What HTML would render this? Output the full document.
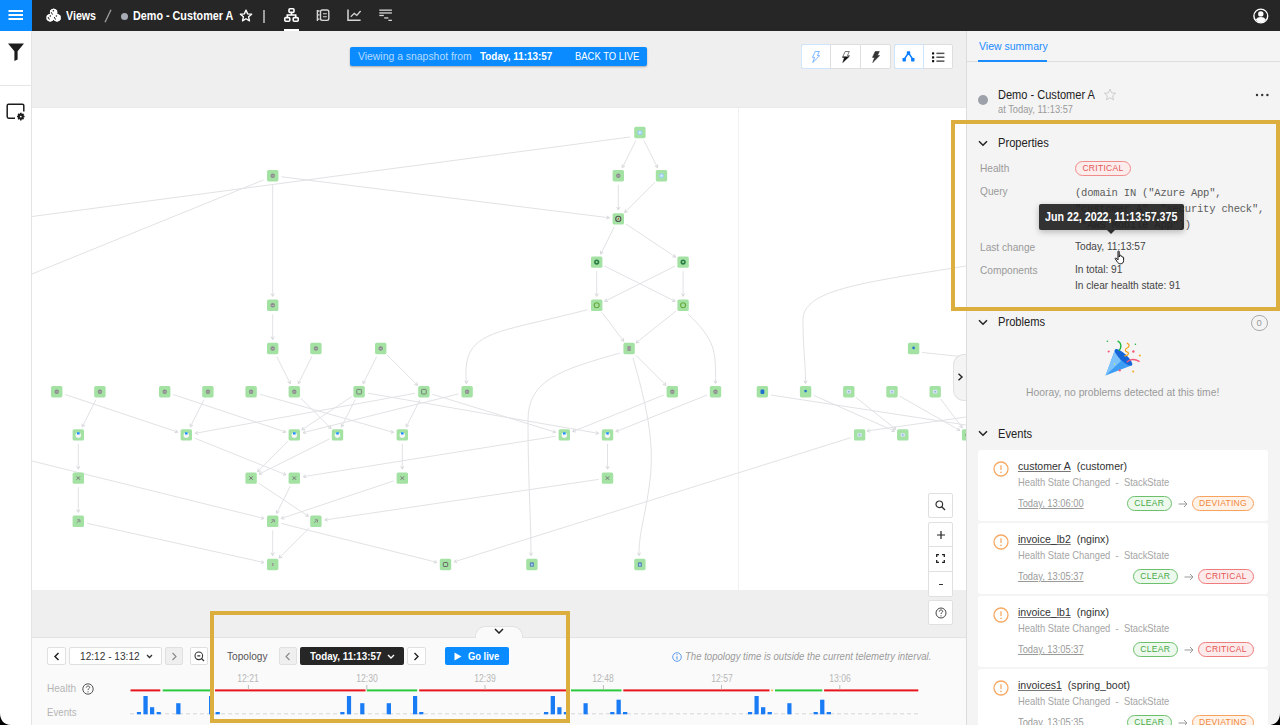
<!DOCTYPE html>
<html><head><meta charset="utf-8">
<style>
*{box-sizing:border-box;margin:0;padding:0}
html,body{width:1280px;height:725px;overflow:hidden;background:#fff;font-family:"Liberation Sans",sans-serif;color:#222}
.abs{position:absolute}
#top{position:absolute;left:0;top:0;width:1280px;height:31px;background:#262626}
#menu{position:absolute;left:0;top:0;width:32px;height:31px;background:#0a8bff}
#side{position:absolute;left:0;top:31px;width:32px;height:694px;background:#fff;border-right:1px solid #e4e4e4}
#band1{position:absolute;left:32px;top:31px;width:934px;height:77px;background:#efefef;border-bottom:1px solid #eaeaea}
#canvas{position:absolute;left:32px;top:108px;width:934px;height:482px;background:#fff}
#band2{position:absolute;left:32px;top:590px;width:934px;height:48px;background:#efefef;border-bottom:1px solid #e2e2e2}
#bottom{position:absolute;left:32px;top:638px;width:934px;height:87px;background:#fafafa}
#panel{position:absolute;left:966px;top:31px;width:314px;height:694px;background:#f4f4f4;border-left:1px solid #dcdcdc}
.t{position:absolute;white-space:nowrap;line-height:1.15}
.sx{transform:scaleX(.86);transform-origin:0 50%}
.hl{position:absolute;border:4px solid #dcae3d}
</style></head><body>
<div id="top"></div>
<div id="menu"><svg class="abs" style="left:8px;top:9px" width="16" height="12" viewBox="0 0 16 12"><rect x="0.5" y="1" width="14.5" height="2" fill="#fff"/><rect x="0.5" y="5" width="14.5" height="2" fill="#fff"/><rect x="0.5" y="9" width="14.5" height="2" fill="#fff"/></svg></div>
<svg class="abs" style="left:44px;top:6px" width="20" height="19" viewBox="44 6 20 19">
<g fill="#fff"><path d="M53.6 8.6L57.2 10.6V14.4L53.6 16.4L50 14.4V10.6Z"/><path d="M50.2 13.8L53.8 15.8V19.8L50.2 21.8L46.6 19.8V15.8Z"/><path d="M57 13.8L60.6 15.8V19.8L57 21.8L53.4 19.8V15.8Z"/>
<circle cx="53.6" cy="12.5" r="3.7"/><circle cx="50.2" cy="17.8" r="3.7"/><circle cx="57" cy="17.8" r="3.7"/></g>
<g fill="#1a1a1a"><circle cx="53.4" cy="10.8" r=".75"/><circle cx="50.3" cy="15.9" r=".75"/><circle cx="56.4" cy="15.9" r=".75"/></g>
<g stroke="#1a1a1a" stroke-width="1" stroke-linecap="round"><path d="M51.4 12.6L52.3 14.2M48.2 17.4L49.2 19.2M54.4 17.4L55.4 19.2"/></g>
</svg>
<div class="t" style="left:66px;top:9px;font-size:13px;color:#fff;font-weight:bold;transform:scaleX(.82);transform-origin:0 50%">Views</div>
<svg class="abs" style="left:104px;top:9px" width="8" height="14" viewBox="0 0 8 14"><path d="M1 13.2L7 0.8" stroke="#9a9a9a" stroke-width="1.4"/></svg>
<div class="abs" style="left:121px;top:12.5px;width:7px;height:7px;border-radius:50%;background:#a7acb4"></div>
<div class="t" style="left:133px;top:9px;font-size:13px;color:#fff;font-weight:bold;transform:scaleX(.83);transform-origin:0 50%">Demo - Customer A</div>
<svg class="abs" style="left:239px;top:9px" width="14" height="13" viewBox="0 0 24 23"><path d="M12 2 L14.9 8.6 L22 9.2 L16.6 13.9 L18.2 20.9 L12 17.2 L5.8 20.9 L7.4 13.9 L2 9.2 L9.1 8.6 Z" fill="none" stroke="#fff" stroke-width="2.4" stroke-linejoin="round"/></svg>
<div class="abs" style="left:263px;top:9.5px;width:2px;height:13.5px;background:#9d9d9d"></div>
<svg class="abs" style="left:284px;top:8px" width="15" height="14" viewBox="0 0 15 14"><g fill="none" stroke="#fff" stroke-width="1.6"><rect x="5" y="0.8" width="5" height="3.6" rx="1"/><rect x="0.8" y="9.6" width="5" height="3.6" rx="1"/><rect x="9.2" y="9.6" width="5" height="3.6" rx="1"/><path d="M7.5 4.4V7H3.3V9.6M7.5 7H11.7V9.6"/></g></svg>
<div class="abs" style="left:284px;top:28.5px;width:15px;height:2.5px;background:#fff"></div>
<svg class="abs" style="left:310px;top:4px" width="90" height="22" viewBox="310 4 90 22">
<g fill="none" stroke="#d6d6d6" stroke-width="1.4">
<path d="M317.4 10V21M317.4 11H319.6M317.4 14.9H319.6M317.4 19.1H319.6"/>
<rect x="320.5" y="10" width="8.3" height="10.4" rx="1.8"/>
<path d="M323 13.8H326.8M323 16.7H326.8" stroke-width="1.1"/>
<path d="M348 9.6V20.3H360.6" stroke-width="1.5"/>
<path d="M350.8 16.7L354.3 13.4L356.8 15.4L360.6 11" stroke-width="1.3"/>
</g>
<g fill="#d6d6d6"><rect x="379.3" y="9.5" width="12.6" height="1.3"/><rect x="379.3" y="12.3" width="12.6" height="1.3"/><rect x="379.3" y="14.8" width="4.5" height="1.3"/><rect x="384.2" y="17.3" width="4.2" height="1.3"/><rect x="388.4" y="19.7" width="3.5" height="1.3"/></g>
</svg>
<svg class="abs" style="left:1252.5px;top:7.5px" width="16" height="16" viewBox="0 0 16 16"><circle cx="7.8" cy="8" r="6.9" fill="none" stroke="#fff" stroke-width="1.4"/><circle cx="7.8" cy="5.9" r="2.7" fill="#fff"/><path d="M2.8 11.6C4 9.6 5.6 8.9 7.8 8.9C10 8.9 11.6 9.6 12.8 11.6C11.6 13.6 9.8 14.4 7.8 14.4C5.8 14.4 4 13.6 2.8 11.6Z" fill="#fff"/></svg>
<div id="side">
<svg class="abs" style="left:8px;top:12px" width="16" height="18" viewBox="0 0 16 18"><path d="M0 0.5H16L9.6 8.2V16.6L6.4 18V8.2Z" fill="#1c1c1c"/></svg>
<div class="abs" style="left:0;top:54px;width:31px;height:1px;background:#e6e6e6"></div>
<svg class="abs" style="left:6px;top:72px" width="20" height="18" viewBox="0 0 20 18"><path d="M9 15.2H2.6Q1.2 15.2 1.2 13.8V2.6Q1.2 1.2 2.6 1.2H16.4Q17.8 1.2 17.8 2.6V8.5" fill="none" stroke="#1c1c1c" stroke-width="1.5"/><g transform="translate(14.8,13.6) scale(.9)"><circle r="2.6" fill="none" stroke="#1c1c1c" stroke-width="1.6"/><g stroke="#1c1c1c" stroke-width="1.7"><path d="M0 -4.2V4.2M-4.2 0H4.2M-3 -3L3 3M-3 3L3 -3"/></g><circle r="1" fill="#fff"/></g></svg>
</div>
<div id="band1"></div>
<div class="abs" style="left:350px;top:47px;width:297px;height:19px;background:#0a8bff;border-radius:2px;box-shadow:0 1px 2px rgba(0,0,0,.3)"></div>
<div class="t" style="left:357.5px;top:50px;font-size:11px;color:#b5dbff;transform:scaleX(.946);transform-origin:0 50%">Viewing a snapshot from</div>
<div class="t" style="left:480px;top:50px;font-size:11px;color:#fff;font-weight:bold;transform:scaleX(.9);transform-origin:0 50%">Today, 11:13:57</div>
<div class="t" style="left:575px;top:50px;font-size:11px;color:#fff;transform:scaleX(.86);transform-origin:0 50%">BACK TO LIVE</div>
<div class="abs" style="left:801px;top:43.5px;width:89.5px;height:25px;background:#fff;border:1px solid #dedede;border-radius:2px"></div>
<div class="abs" style="left:801px;top:43.5px;width:30px;height:25px;border:1px solid #cfe5fb;border-radius:2px 0 0 2px"></div>
<div class="abs" style="left:830px;top:44px;width:1px;height:24px;background:#dedede"></div>
<div class="abs" style="left:860px;top:44px;width:1px;height:24px;background:#dedede"></div>
<div class="abs" style="left:893.5px;top:43.5px;width:59.5px;height:25px;background:#fff;border:1px solid #dedede;border-radius:2px"></div>
<div class="abs" style="left:893.5px;top:43.5px;width:30px;height:25px;border:1px solid #cfe5fb;border-radius:2px 0 0 2px"></div>
<svg class="abs" style="left:811.5px;top:50.5px" width="8" height="12" viewBox="0 0 8 12"><path d="M3.2 0.5H7.3L5.4 4.6H7.6L0.8 11.6L2.6 6.4H0.5Z" fill="none" stroke="#5aa5ff" stroke-width="0.8" stroke-linejoin="round"/></svg>
<svg class="abs" style="left:841.5px;top:50.5px" width="8" height="12" viewBox="0 0 8 12"><path d="M3.2 0.5H7.3L5.4 4.6H7.6L0.8 11.6L2.6 6.4H0.5Z" fill="none" stroke="#444" stroke-width="0.7" stroke-linejoin="round"/><path d="M0.9 5.5H7.6L0.8 11.6L2.4 6.6H0.4Z" fill="#111"/></svg>
<svg class="abs" style="left:871.5px;top:50.5px" width="8" height="12" viewBox="0 0 8 12"><path d="M3.2 0.5H7.3L5.4 4.6H7.6L0.8 11.6L2.6 6.4H0.5Z" fill="#333" stroke="#333" stroke-width="0.6" stroke-linejoin="round"/></svg>
<svg class="abs" style="left:902px;top:51px" width="13" height="11" viewBox="0 0 13 11"><path d="M6.5 2L2 8.5M6.5 2L11 8.5" stroke="#0a7cff" stroke-width="1.4"/><rect x="4.8" y="0.3" width="3.4" height="3.4" rx=".6" fill="#0a7cff"/><rect x="0.5" y="7" width="3.4" height="3.4" rx=".6" fill="#0a7cff"/><rect x="9.1" y="7" width="3.4" height="3.4" rx=".6" fill="#0a7cff"/></svg>
<svg class="abs" style="left:932px;top:51.5px" width="13" height="11" viewBox="0 0 13 11"><g fill="#111"><rect x="0" y="0.3" width="2.2" height="2.2" rx=".5"/><rect x="0" y="4.2" width="2.2" height="2.2" rx=".5"/><rect x="0" y="8.1" width="2.2" height="2.2" rx=".5"/></g><g fill="#555"><rect x="4.4" y="0.6" width="8" height="1.5"/><rect x="4.4" y="4.5" width="8" height="1.5"/><rect x="4.4" y="8.4" width="8" height="1.5"/></g></svg>
<div id="canvas"></div>
<!--GRAPH-->
<svg class="abs" style="left:0;top:0" width="966" height="590" viewBox="0 0 966 590">
<rect x="32" y="108" width="934" height="482" fill="#fff"/>
<line x1="738.5" y1="108" x2="738.5" y2="590" stroke="#f1f1f1" stroke-width="1"/>
<path d="M635.9 140.5L622.3 167.7M643.9 140.5L657.5 167.7M272.7 184.7L272.7 296.3M281.6 176.8L609.4 217.8M618.3 184.7L618.3 209.9M655.1 182.1L624.7 212.5M614.3 226.9L600.7 254.1M625.8 223.9L675.6 257.1M596.7 271.1L596.7 296.3M683.1 271.1L683.1 296.3M604.7 266.1L675.1 301.3M675.1 266.1L604.7 301.3M272.7 314.3L272.7 339.5M602.1 312.5L623.7 341.3M676.1 310.9L636.1 342.9M276.7 356.5L290.3 383.7M311.9 356.5L298.3 383.7M376.7 356.5L363.1 383.7M387.1 354.9L417.5 385.3M635.5 354.9L665.9 385.3M95.9 399.7L82.3 426.9M65.2 394.5L177.8 432.1M203.9 399.7L190.3 426.9M173.2 394.5L285.8 432.1M259.8 394.2L393.6 432.4M300.7 398.1L331.1 428.5M351.6 396.7L301.8 429.9M355.1 399.7L341.5 426.9M415.0 393.3L195.2 433.3M458.4 393.9L303.0 432.7M419.9 399.7L406.3 426.9M368.0 393.2L598.6 433.4M432.5 394.3L555.7 432.3M663.9 395.0L572.7 431.6M707.1 395.0L615.9 431.6M813.8 395.4L894.6 431.2M855.8 397.3L895.8 429.3M899.8 396.2L959.8 430.4M940.6 398.9L962.2 427.7M555.4 436.3L303.2 476.7M78.3 443.9L78.3 469.1M194.7 438.2L285.9 474.8M287.9 441.3L257.5 471.7M329.5 438.9L259.1 474.1M402.3 443.9L402.3 469.1M607.5 443.9L607.5 469.1M598.6 479.4L324.8 520.0M78.3 487.1L78.3 512.3M258.6 483.1L308.4 516.3M290.3 486.1L276.7 513.3M393.8 480.9L281.2 518.5M851.0 437.6L454.1 561.8M87.1 523.3L263.9 562.5M272.7 530.3L272.7 555.5M309.5 527.7L279.1 558.1M281.4 523.5L436.8 562.3M630 137L32 216.5M263.5 180L32 274M32 461L264 518.5M922 352.5L966 357M771 395L966 425M966 417L867 431M587.4 309.7C490 335 462 330 466.4 383.5M620 353C560 370 528 380 528 420C528 480 531 520 531 555.5M633 358C645 400 655 440 650 480C645 520 639 530 639 555.5M688 314C715 340 716 350 715.5 383.5M966 266C860 283 803 290 803 320C803 350 805.5 360 805.5 383.5" fill="none" stroke="#e1e2e5" stroke-width="1"/>
<path d="M622.1 164.5L622.3 167.7L625.0 165.9M654.8 165.9L657.5 167.7L657.7 164.5M271.1 293.5L272.7 296.3L274.3 293.5M606.4 219.0L609.4 217.8L606.8 215.9M616.7 207.1L618.3 209.9L619.9 207.1M625.5 209.4L624.7 212.5L627.8 211.7M600.5 250.9L600.7 254.1L603.4 252.3M672.4 256.9L675.6 257.1L674.2 254.2M595.1 293.5L596.7 296.3L598.3 293.5M681.5 293.5L683.1 296.3L684.7 293.5M671.9 301.5L675.1 301.3L673.3 298.6M606.5 298.6L604.7 301.3L607.9 301.5M271.1 336.7L272.7 339.5L274.3 336.7M620.8 340.0L623.7 341.3L623.3 338.1M637.3 339.9L636.1 342.9L639.3 342.4M287.6 381.9L290.3 383.7L290.5 380.5M298.1 380.5L298.3 383.7L301.0 381.9M362.9 380.5L363.1 383.7L365.8 381.9M414.4 384.5L417.5 385.3L416.7 382.2M662.8 384.5L665.9 385.3L665.1 382.2M82.1 423.7L82.3 426.9L85.0 425.1M174.6 432.7L177.8 432.1L175.6 429.7M190.1 423.7L190.3 426.9L193.0 425.1M282.6 432.7L285.8 432.1L283.6 429.7M390.5 433.2L393.6 432.4L391.4 430.1M328.0 427.7L331.1 428.5L330.3 425.4M303.2 427.0L301.8 429.9L305.0 429.7M341.3 423.7L341.5 426.9L344.2 425.1M197.6 431.2L195.2 433.3L198.2 434.4M305.3 430.5L303.0 432.7L306.1 433.6M406.1 423.7L406.3 426.9L409.0 425.1M595.6 434.5L598.6 433.4L596.2 431.3M552.6 433.0L555.7 432.3L553.5 429.9M574.6 429.0L572.7 431.6L575.8 432.0M617.8 429.0L615.9 431.6L619.0 432.0M891.4 431.6L894.6 431.2L892.7 428.7M892.6 428.8L895.8 429.3L894.6 426.3M956.6 430.4L959.8 430.4L958.2 427.7M959.3 426.4L962.2 427.7L961.8 424.5M305.7 474.7L303.2 476.7L306.2 477.8M76.7 466.3L78.3 469.1L79.9 466.3M282.8 475.2L285.9 474.8L284.0 472.2M258.3 468.6L257.5 471.7L260.6 470.9M260.9 471.4L259.1 474.1L262.3 474.3M400.7 466.3L402.3 469.1L403.9 466.3M605.9 466.3L607.5 469.1L609.1 466.3M327.3 518.0L324.8 520.0L327.8 521.2M76.7 509.5L78.3 512.3L79.9 509.5M305.2 516.1L308.4 516.3L307.0 513.4M276.5 510.1L276.7 513.3L279.4 511.5M283.4 516.1L281.2 518.5L284.4 519.1M456.3 559.5L454.1 561.8L457.2 562.5M260.9 563.5L263.9 562.5L261.6 560.4M271.1 552.7L272.7 555.5L274.3 552.7M279.9 555.0L279.1 558.1L282.2 557.3M433.7 563.2L436.8 562.3L434.5 560.1M260.9 519.4L264.0 518.5L261.7 516.3M869.5 429.0L867.0 431.0L870.0 432.2M464.8 380.7L466.4 383.5L468.0 380.7M529.4 552.7L531.0 555.5L532.6 552.7M637.4 552.7L639.0 555.5L640.6 552.7M713.9 380.7L715.5 383.5L717.1 380.7M803.9 380.7L805.5 383.5L807.1 380.7" fill="none" stroke="#d6d7da" stroke-width="1"/>
<rect x="634.2" y="126.8" width="11.4" height="11.4" rx="1.6" fill="#a4e2a4"/>
<circle cx="639.9" cy="132.5" r="2.6" fill="#9fd2ec"/><circle cx="639.9" cy="132.5" r="1" fill="#e8f6ff"/>
<rect x="267.0" y="170.0" width="11.4" height="11.4" rx="1.6" fill="#a4e2a4"/>
<circle cx="272.7" cy="175.7" r="2.2" fill="#8a8a8a"/><path d="M271.4 175.9h2.6" stroke="#c9c9c9" stroke-width=".7"/>
<rect x="612.6" y="170.0" width="11.4" height="11.4" rx="1.6" fill="#a4e2a4"/>
<circle cx="618.3" cy="175.7" r="2.2" fill="#8a8a8a"/><path d="M617.0 175.9h2.6" stroke="#c9c9c9" stroke-width=".7"/>
<rect x="655.8" y="170.0" width="11.4" height="11.4" rx="1.6" fill="#a4e2a4"/>
<circle cx="661.5" cy="175.7" r="2.6" fill="#9fd2ec"/><circle cx="661.5" cy="175.7" r="1" fill="#e8f6ff"/>
<rect x="612.6" y="213.2" width="11.4" height="11.4" rx="1.6" fill="#a4e2a4"/>
<circle cx="618.3" cy="218.9" r="2.6" fill="none" stroke="#555" stroke-width="1.1"/><path d="M618.8 217.9l-1 2" stroke="#d04040" stroke-width="1"/>
<rect x="591.0" y="256.4" width="11.4" height="11.4" rx="1.6" fill="#a4e2a4"/>
<circle cx="596.7" cy="262.1" r="2.6" fill="#2a7d45"/><circle cx="596.7" cy="262.1" r="1" fill="#a4e2a4"/>
<rect x="677.4" y="256.4" width="11.4" height="11.4" rx="1.6" fill="#a4e2a4"/>
<circle cx="683.1" cy="262.1" r="2.6" fill="#2a7d45"/><circle cx="683.1" cy="262.1" r="1" fill="#a4e2a4"/>
<rect x="267.0" y="299.6" width="11.4" height="11.4" rx="1.6" fill="#a4e2a4"/>
<circle cx="272.7" cy="305.3" r="2.2" fill="#8a8a8a"/><path d="M271.4 305.5h2.6" stroke="#c9c9c9" stroke-width=".7"/>
<rect x="591.0" y="299.6" width="11.4" height="11.4" rx="1.6" fill="#a4e2a4"/>
<circle cx="596.7" cy="305.3" r="2.5" fill="none" stroke="#6aa83a" stroke-width="1.1"/>
<rect x="677.4" y="299.6" width="11.4" height="11.4" rx="1.6" fill="#a4e2a4"/>
<circle cx="683.1" cy="305.3" r="2.5" fill="none" stroke="#6aa83a" stroke-width="1.1"/>
<rect x="267.0" y="342.8" width="11.4" height="11.4" rx="1.6" fill="#a4e2a4"/>
<circle cx="272.7" cy="348.5" r="2.2" fill="#8a8a8a"/><path d="M271.4 348.7h2.6" stroke="#c9c9c9" stroke-width=".7"/>
<rect x="310.2" y="342.8" width="11.4" height="11.4" rx="1.6" fill="#a4e2a4"/>
<circle cx="315.9" cy="348.5" r="2.2" fill="#8a8a8a"/><path d="M314.6 348.7h2.6" stroke="#c9c9c9" stroke-width=".7"/>
<rect x="375.0" y="342.8" width="11.4" height="11.4" rx="1.6" fill="#a4e2a4"/>
<circle cx="380.7" cy="348.5" r="2.2" fill="#8a8a8a"/><path d="M379.4 348.7h2.6" stroke="#c9c9c9" stroke-width=".7"/>
<rect x="623.4" y="342.8" width="11.4" height="11.4" rx="1.6" fill="#a4e2a4"/>
<rect x="627.4" y="346.0" width="3.4" height="5" fill="#999"/>
<rect x="907.9" y="342.8" width="11.4" height="11.4" rx="1.6" fill="#a4e2a4"/>
<circle cx="913.6" cy="347.9" r="1.3" fill="#1f6fd0"/>
<rect x="51.0" y="386.0" width="11.4" height="11.4" rx="1.6" fill="#a4e2a4"/>
<circle cx="56.7" cy="391.7" r="2.2" fill="#8a8a8a"/><path d="M55.4 391.9h2.6" stroke="#c9c9c9" stroke-width=".7"/>
<rect x="94.2" y="386.0" width="11.4" height="11.4" rx="1.6" fill="#a4e2a4"/>
<circle cx="99.9" cy="391.7" r="2.2" fill="#8a8a8a"/><path d="M98.6 391.9h2.6" stroke="#c9c9c9" stroke-width=".7"/>
<rect x="159.0" y="386.0" width="11.4" height="11.4" rx="1.6" fill="#a4e2a4"/>
<circle cx="164.7" cy="391.7" r="2.2" fill="#8a8a8a"/><path d="M163.4 391.9h2.6" stroke="#c9c9c9" stroke-width=".7"/>
<rect x="202.2" y="386.0" width="11.4" height="11.4" rx="1.6" fill="#a4e2a4"/>
<circle cx="207.9" cy="391.7" r="2.2" fill="#8a8a8a"/><path d="M206.6 391.9h2.6" stroke="#c9c9c9" stroke-width=".7"/>
<rect x="245.4" y="386.0" width="11.4" height="11.4" rx="1.6" fill="#a4e2a4"/>
<circle cx="251.1" cy="391.7" r="2.2" fill="#8a8a8a"/><path d="M249.8 391.9h2.6" stroke="#c9c9c9" stroke-width=".7"/>
<rect x="288.6" y="386.0" width="11.4" height="11.4" rx="1.6" fill="#a4e2a4"/>
<circle cx="294.3" cy="391.7" r="2.2" fill="#8a8a8a"/><path d="M293.0 391.9h2.6" stroke="#c9c9c9" stroke-width=".7"/>
<rect x="353.4" y="386.0" width="11.4" height="11.4" rx="1.6" fill="#a4e2a4"/>
<rect x="356.8" y="389.4" width="4.6" height="4.6" rx=".6" fill="none" stroke="#777" stroke-width=".9"/>
<rect x="418.2" y="386.0" width="11.4" height="11.4" rx="1.6" fill="#a4e2a4"/>
<rect x="421.6" y="389.4" width="4.6" height="4.6" rx=".6" fill="none" stroke="#777" stroke-width=".9"/>
<rect x="461.4" y="386.0" width="11.4" height="11.4" rx="1.6" fill="#a4e2a4"/>
<circle cx="467.1" cy="391.7" r="2.2" fill="#8a8a8a"/><path d="M465.8 391.9h2.6" stroke="#c9c9c9" stroke-width=".7"/>
<rect x="666.6" y="386.0" width="11.4" height="11.4" rx="1.6" fill="#a4e2a4"/>
<circle cx="672.3" cy="391.7" r="2.2" fill="#8a8a8a"/><path d="M671.0 391.9h2.6" stroke="#c9c9c9" stroke-width=".7"/>
<rect x="709.8" y="386.0" width="11.4" height="11.4" rx="1.6" fill="#a4e2a4"/>
<circle cx="715.5" cy="391.7" r="2.2" fill="#8a8a8a"/><path d="M714.2 391.9h2.6" stroke="#c9c9c9" stroke-width=".7"/>
<rect x="756.7" y="386.0" width="11.4" height="11.4" rx="1.6" fill="#a4e2a4"/>
<rect x="760.5" y="389.5" width="3.8" height="4.4" rx="1" fill="#1f6fd0"/>
<rect x="799.9" y="386.0" width="11.4" height="11.4" rx="1.6" fill="#a4e2a4"/>
<circle cx="805.6" cy="391.1" r="1.3" fill="#1f6fd0"/>
<rect x="843.1" y="386.0" width="11.4" height="11.4" rx="1.6" fill="#a4e2a4"/>
<rect x="846.6" y="389.9" width="4.4" height="3.6" fill="#d5e2f2"/><rect x="848.0" y="391.0" width="1.6" height="1.4" fill="#8fb3e0"/>
<rect x="886.3" y="386.0" width="11.4" height="11.4" rx="1.6" fill="#a4e2a4"/>
<rect x="889.8" y="389.9" width="4.4" height="3.6" fill="#d5e2f2"/><rect x="891.2" y="391.0" width="1.6" height="1.4" fill="#8fb3e0"/>
<rect x="929.5" y="386.0" width="11.4" height="11.4" rx="1.6" fill="#a4e2a4"/>
<rect x="933.0" y="389.9" width="4.4" height="3.6" fill="#d5e2f2"/><rect x="934.4" y="391.0" width="1.6" height="1.4" fill="#8fb3e0"/>
<rect x="72.6" y="429.2" width="11.4" height="11.4" rx="1.6" fill="#a4e2a4"/>
<circle cx="78.3" cy="435.3" r="2.7" fill="#f6f6f6"/><rect x="77.0" y="432.3" width="2.6" height="2.2" fill="#1a8cff"/>
<rect x="180.6" y="429.2" width="11.4" height="11.4" rx="1.6" fill="#a4e2a4"/>
<circle cx="186.3" cy="435.3" r="2.7" fill="#f6f6f6"/><rect x="185.0" y="432.3" width="2.6" height="2.2" fill="#1a8cff"/>
<rect x="288.6" y="429.2" width="11.4" height="11.4" rx="1.6" fill="#a4e2a4"/>
<circle cx="294.3" cy="435.3" r="2.7" fill="#f6f6f6"/><rect x="293.0" y="432.3" width="2.6" height="2.2" fill="#1a8cff"/>
<rect x="331.8" y="429.2" width="11.4" height="11.4" rx="1.6" fill="#a4e2a4"/>
<circle cx="337.5" cy="435.3" r="2.7" fill="#f6f6f6"/><rect x="336.2" y="432.3" width="2.6" height="2.2" fill="#1a8cff"/>
<rect x="396.6" y="429.2" width="11.4" height="11.4" rx="1.6" fill="#a4e2a4"/>
<circle cx="402.3" cy="435.3" r="2.7" fill="#f6f6f6"/><rect x="401.0" y="432.3" width="2.6" height="2.2" fill="#1a8cff"/>
<rect x="558.6" y="429.2" width="11.4" height="11.4" rx="1.6" fill="#a4e2a4"/>
<circle cx="564.3" cy="435.3" r="2.7" fill="#f6f6f6"/><rect x="563.0" y="432.3" width="2.6" height="2.2" fill="#1a8cff"/>
<rect x="601.8" y="429.2" width="11.4" height="11.4" rx="1.6" fill="#a4e2a4"/>
<circle cx="607.5" cy="435.3" r="2.7" fill="#f6f6f6"/><rect x="606.2" y="432.3" width="2.6" height="2.2" fill="#1a8cff"/>
<rect x="853.9" y="429.2" width="11.4" height="11.4" rx="1.6" fill="#a4e2a4"/>
<rect x="857.4" y="433.1" width="4.4" height="3.6" fill="#d5e2f2"/><rect x="858.8" y="434.2" width="1.6" height="1.4" fill="#8fb3e0"/>
<rect x="897.1" y="429.2" width="11.4" height="11.4" rx="1.6" fill="#a4e2a4"/>
<rect x="900.6" y="433.1" width="4.4" height="3.6" fill="#d5e2f2"/><rect x="902.0" y="434.2" width="1.6" height="1.4" fill="#8fb3e0"/>
<rect x="961.9" y="429.2" width="11.4" height="11.4" rx="1.6" fill="#a4e2a4"/>
<circle cx="967.6" cy="434.9" r="2.2" fill="#8a8a8a"/><path d="M966.3 435.1h2.6" stroke="#c9c9c9" stroke-width=".7"/>
<rect x="72.6" y="472.4" width="11.4" height="11.4" rx="1.6" fill="#a4e2a4"/>
<path d="M76.6 476.4l3.4 3.4m0 -3.4l-3.4 3.4" stroke="#777" stroke-width="1"/>
<rect x="245.4" y="472.4" width="11.4" height="11.4" rx="1.6" fill="#a4e2a4"/>
<path d="M249.4 476.4l3.4 3.4m0 -3.4l-3.4 3.4" stroke="#777" stroke-width="1"/>
<rect x="288.6" y="472.4" width="11.4" height="11.4" rx="1.6" fill="#a4e2a4"/>
<path d="M292.6 476.4l3.4 3.4m0 -3.4l-3.4 3.4" stroke="#777" stroke-width="1"/>
<rect x="396.6" y="472.4" width="11.4" height="11.4" rx="1.6" fill="#a4e2a4"/>
<path d="M400.6 476.4l3.4 3.4m0 -3.4l-3.4 3.4" stroke="#777" stroke-width="1"/>
<rect x="601.8" y="472.4" width="11.4" height="11.4" rx="1.6" fill="#a4e2a4"/>
<path d="M605.8 476.4l3.4 3.4m0 -3.4l-3.4 3.4" stroke="#777" stroke-width="1"/>
<rect x="72.6" y="515.6" width="11.4" height="11.4" rx="1.6" fill="#a4e2a4"/>
<path d="M77.3 519.8h2.6v2.6M76.7 522.9l2.4 -2.4" fill="none" stroke="#888" stroke-width="1"/>
<rect x="267.0" y="515.6" width="11.4" height="11.4" rx="1.6" fill="#a4e2a4"/>
<path d="M271.7 519.8h2.6v2.6M271.1 522.9l2.4 -2.4" fill="none" stroke="#888" stroke-width="1"/>
<rect x="310.2" y="515.6" width="11.4" height="11.4" rx="1.6" fill="#a4e2a4"/>
<path d="M314.9 519.8h2.6v2.6M314.3 522.9l2.4 -2.4" fill="none" stroke="#888" stroke-width="1"/>
<rect x="267.0" y="558.8" width="11.4" height="11.4" rx="1.6" fill="#a4e2a4"/>
<rect x="271.9" y="563.0" width="1.6" height="3" fill="#999"/>
<rect x="439.8" y="558.8" width="11.4" height="11.4" rx="1.6" fill="#a4e2a4"/>
<rect x="443.3" y="562.5" width="4.4" height="4" rx=".8" fill="none" stroke="#666" stroke-width="1"/>
<rect x="526.2" y="558.8" width="11.4" height="11.4" rx="1.6" fill="#a4e2a4"/>
<rect x="529.9" y="562.2" width="4" height="4.6" rx=".6" fill="#5a86b8"/><rect x="531.1" y="563.7" width="1.6" height="2" fill="#a8d8ff"/>
<rect x="634.2" y="558.8" width="11.4" height="11.4" rx="1.6" fill="#a4e2a4"/>
<rect x="637.9" y="562.2" width="4" height="4.6" rx=".6" fill="#5a86b8"/><rect x="639.1" y="563.7" width="1.6" height="2" fill="#a8d8ff"/>
</svg>
<!--/GRAPH-->
<div class="abs" style="left:953px;top:354px;width:14px;height:47px;background:#f4f4f4;border:1px solid #e2e2e2;border-right:none;border-radius:11px 0 0 11px"></div>
<svg class="abs" style="left:956.5px;top:373px" width="7" height="8" viewBox="0 0 7 8"><path d="M1.5 0.8L5 4L1.5 7.2" fill="none" stroke="#222" stroke-width="1.4"/></svg>
<div id="band2"></div>
<div id="bottom"></div>
<div class="abs" style="left:475px;top:626px;width:48px;height:12px;background:#fafafa;border:1px solid #e2e2e2;border-bottom:none;border-radius:10px 10px 0 0"></div>
<svg class="abs" style="left:494px;top:628px" width="10" height="6" viewBox="0 0 10 6"><path d="M1 1L5 5L9 1" fill="none" stroke="#222" stroke-width="1.5"/></svg>
<div class="abs" style="left:928px;top:493px;width:25px;height:25px;background:#fff;border:1px solid #e0e0e0;border-radius:2px"></div>
<svg class="abs" style="left:935px;top:500px" width="11" height="11" viewBox="0 0 11 11"><circle cx="4.3" cy="4.3" r="3.3" fill="none" stroke="#333" stroke-width="1.2"/><path d="M6.8 6.8L10 10" stroke="#333" stroke-width="1.4"/></svg>
<div class="abs" style="left:928px;top:521.5px;width:25px;height:75px;background:#fff;border:1px solid #e0e0e0;border-radius:2px"></div>
<div class="abs" style="left:929px;top:546px;width:23px;height:1px;background:#e0e0e0"></div>
<div class="abs" style="left:929px;top:571px;width:23px;height:1px;background:#e0e0e0"></div>
<svg class="abs" style="left:935.5px;top:529.5px" width="10" height="10" viewBox="0 0 10 10"><path d="M5 1V9M1 5H9" stroke="#222" stroke-width="1.2"/></svg>
<svg class="abs" style="left:936px;top:554px" width="9" height="9" viewBox="0 0 9 9"><path d="M0.7 3V0.7H3M6 0.7H8.3V3M8.3 6V8.3H6M3 8.3H0.7V6" fill="none" stroke="#222" stroke-width="1.3"/></svg>
<div class="abs" style="left:938.5px;top:584px;width:4px;height:1.2px;background:#333"></div>
<div class="abs" style="left:928px;top:600px;width:25px;height:25px;background:#fff;border:1px solid #e0e0e0;border-radius:2px"></div>
<svg class="abs" style="left:934.5px;top:606.5px" width="12" height="12" viewBox="0 0 12 12"><circle cx="6" cy="6" r="5" fill="none" stroke="#444" stroke-width="1"/><path d="M4.3 4.6C4.3 3.6 5 3 6 3C7 3 7.7 3.6 7.7 4.5C7.7 5.5 6 5.6 6 7" fill="none" stroke="#444" stroke-width="1"/><circle cx="6" cy="8.8" r=".65" fill="#444"/></svg>
<div class="abs" style="left:47px;top:647px;width:18.5px;height:18px;background:#fff;border:1px solid #e0e0e0;border-radius:2px"></div>
<svg class="abs" style="left:52.5px;top:652px" width="7" height="9" viewBox="0 0 7 9"><path d="M5.5 1L2 4.5L5.5 8" fill="none" stroke="#222" stroke-width="1.5"/></svg>
<div class="abs" style="left:68.5px;top:647px;width:93px;height:18px;background:#fff;border:1px solid #e0e0e0;border-radius:2px"></div>
<div class="t" style="left:79.5px;top:649.7px;font-size:11.5px;color:#333;transform:scaleX(.88);transform-origin:0 50%">12:12 - 13:12</div>
<svg class="abs" style="left:145.5px;top:654px" width="7" height="5" viewBox="0 0 7 5"><path d="M1 1L3.5 3.5L6 1" fill="none" stroke="#333" stroke-width="1.3"/></svg>
<div class="abs" style="left:165px;top:647px;width:18px;height:18px;background:#efefef;border:1px solid #e0e0e0;border-radius:2px"></div>
<svg class="abs" style="left:171px;top:652px" width="7" height="9" viewBox="0 0 7 9"><path d="M1.5 1L5 4.5L1.5 8" fill="none" stroke="#888" stroke-width="1.1"/></svg>
<div class="abs" style="left:189.5px;top:647px;width:18px;height:18px;background:#fff;border:1px solid #e0e0e0;border-radius:2px"></div>
<svg class="abs" style="left:193.5px;top:651px" width="11" height="11" viewBox="0 0 11 11"><circle cx="4.8" cy="4.8" r="3.8" fill="none" stroke="#333" stroke-width="1.1"/><path d="M3.3 4.8H6.3M7.5 7.5L10 10" stroke="#333" stroke-width="1.2"/></svg>
<div class="t" style="left:226.5px;top:649.5px;font-size:11.5px;color:#555;transform:scaleX(.88);transform-origin:0 50%">Topology</div>
<div class="abs" style="left:278.5px;top:647px;width:18px;height:18px;background:#efefef;border:1px solid #e0e0e0;border-radius:2px"></div>
<svg class="abs" style="left:284px;top:652px" width="7" height="9" viewBox="0 0 7 9"><path d="M5.5 1L2 4.5L5.5 8" fill="none" stroke="#888" stroke-width="1.1"/></svg>
<div class="abs" style="left:300px;top:647px;width:104px;height:17.5px;background:#262626;border-radius:2px"></div>
<div class="t" style="left:310px;top:649.5px;font-size:11.5px;color:#fff;font-weight:bold;transform:scaleX(.85);transform-origin:0 50%">Today, 11:13:57</div>
<svg class="abs" style="left:386.5px;top:654px" width="8" height="5" viewBox="0 0 8 5"><path d="M1 1L4 4L7 1" fill="none" stroke="#fff" stroke-width="1.4"/></svg>
<div class="abs" style="left:407px;top:647px;width:18.5px;height:18px;background:#fff;border:1px solid #e0e0e0;border-radius:2px"></div>
<svg class="abs" style="left:413px;top:652px" width="7" height="9" viewBox="0 0 7 9"><path d="M1.5 1L5 4.5L1.5 8" fill="none" stroke="#222" stroke-width="1.4"/></svg>
<div class="abs" style="left:444.5px;top:647px;width:64.5px;height:17.5px;background:#0a8bff;border-radius:2px"></div>
<svg class="abs" style="left:454px;top:651.5px" width="8" height="9" viewBox="0 0 8 9"><path d="M0.5 0.5L7.5 4.5L0.5 8.5Z" fill="#fff"/></svg>
<div class="t" style="left:467.5px;top:649.5px;font-size:11.5px;color:#fff;font-weight:bold;transform:scaleX(.815);transform-origin:0 50%">Go live</div>
<svg class="abs" style="left:671.5px;top:651.5px" width="10" height="10" viewBox="0 0 10 10"><circle cx="5" cy="5" r="4.3" fill="none" stroke="#5b9cf0" stroke-width="1"/><path d="M5 4.2V7.6" stroke="#5b9cf0" stroke-width="1.1"/><circle cx="5" cy="2.7" r=".6" fill="#5b9cf0"/></svg>
<div class="t" style="left:684.5px;top:649.5px;font-size:11px;color:#9a9a9a;font-style:italic;transform:scaleX(.872);transform-origin:0 50%">The topology time is outside the current telemetry interval.</div>
<div class="t" style="left:47px;top:682px;font-size:10.5px;color:#b5b5b5;transform:scaleX(.956);transform-origin:0 50%">Health</div>
<svg class="abs" style="left:82px;top:683px" width="12" height="12" viewBox="0 0 12 12"><circle cx="6" cy="6" r="5.2" fill="none" stroke="#555" stroke-width="1"/><path d="M4.3 4.6C4.3 3.6 5 3 6 3C7 3 7.7 3.6 7.7 4.5C7.7 5.5 6 5.6 6 7" fill="none" stroke="#555" stroke-width="1"/><circle cx="6" cy="8.8" r=".65" fill="#555"/></svg>
<div class="t" style="left:47px;top:706px;font-size:10.5px;color:#b5b5b5;transform:scaleX(.92);transform-origin:0 50%">Events</div>
<div class="t" style="left:228.4px;top:673.2px;width:40px;text-align:center;font-size:10px;color:#b8b8b8;transform:scaleX(.86)">12:21</div><div class="t" style="left:346.8px;top:673.2px;width:40px;text-align:center;font-size:10px;color:#b8b8b8;transform:scaleX(.86)">12:30</div><div class="t" style="left:465.0px;top:673.2px;width:40px;text-align:center;font-size:10px;color:#b8b8b8;transform:scaleX(.86)">12:39</div><div class="t" style="left:583.4px;top:673.2px;width:40px;text-align:center;font-size:10px;color:#b8b8b8;transform:scaleX(.86)">12:48</div><div class="t" style="left:701.5px;top:673.2px;width:40px;text-align:center;font-size:10px;color:#b8b8b8;transform:scaleX(.86)">12:57</div><div class="t" style="left:819.8px;top:673.2px;width:40px;text-align:center;font-size:10px;color:#b8b8b8;transform:scaleX(.86)">13:06</div>
<svg class="abs" style="left:0;top:637px" width="966" height="88" viewBox="0 637 966 88">
<line x1="130" y1="713.8" x2="918" y2="713.8" stroke="#d6d6d6" stroke-width="1" stroke-dasharray="4 3"/>
<rect x="130.5" y="689.4" width="29.8" height="2" fill="#e8141c"/>
<rect x="215.0" y="689.4" width="150.5" height="2" fill="#e8141c"/>
<rect x="419.2" y="689.4" width="150.8" height="2" fill="#e8141c"/>
<rect x="623.3" y="689.4" width="146.2" height="2" fill="#e8141c"/>
<rect x="824.1" y="689.4" width="94.2" height="2" fill="#e8141c"/>
<rect x="162.7" y="689.4" width="48.3" height="2" fill="#2bc93c"/>
<rect x="366.8" y="689.4" width="50.4" height="2" fill="#2bc93c"/>
<rect x="571.0" y="689.4" width="50.5" height="2" fill="#2bc93c"/>
<rect x="775.0" y="689.4" width="47.3" height="2" fill="#2bc93c"/>
<rect x="771.3" y="689.6" width="1.6" height="1.6" fill="#f5a623"/>
<rect x="136.9" y="712.0" width="4.1" height="2.3" fill="#1a7cf5"/>
<rect x="143.4" y="696.0" width="4.3" height="18.3" fill="#1a7cf5"/>
<rect x="150.0" y="707.2" width="4.2" height="7.1" fill="#1a7cf5"/>
<rect x="156.6" y="712.0" width="4.2" height="2.3" fill="#1a7cf5"/>
<rect x="176.2" y="703.2" width="4.3" height="11.1" fill="#1a7cf5"/>
<rect x="209.0" y="696.0" width="4.0" height="18.3" fill="#1a7cf5"/>
<rect x="215.6" y="712.0" width="4.2" height="2.3" fill="#1a7cf5"/>
<rect x="340.3" y="712.0" width="4.2" height="2.3" fill="#1a7cf5"/>
<rect x="346.9" y="696.0" width="4.2" height="18.3" fill="#1a7cf5"/>
<rect x="360.2" y="703.2" width="4.2" height="11.1" fill="#1a7cf5"/>
<rect x="386.7" y="703.2" width="4.3" height="11.1" fill="#1a7cf5"/>
<rect x="413.0" y="696.0" width="4.2" height="18.3" fill="#1a7cf5"/>
<rect x="419.2" y="712.0" width="4.2" height="2.3" fill="#1a7cf5"/>
<rect x="544.0" y="712.0" width="4.3" height="2.3" fill="#1a7cf5"/>
<rect x="550.7" y="696.0" width="4.3" height="18.3" fill="#1a7cf5"/>
<rect x="557.3" y="707.2" width="4.2" height="7.1" fill="#1a7cf5"/>
<rect x="563.8" y="712.0" width="4.2" height="2.3" fill="#1a7cf5"/>
<rect x="583.5" y="703.2" width="4.2" height="11.1" fill="#1a7cf5"/>
<rect x="610.2" y="712.0" width="4.2" height="2.3" fill="#1a7cf5"/>
<rect x="616.5" y="699.7" width="4.3" height="14.6" fill="#1a7cf5"/>
<rect x="623.0" y="712.0" width="4.3" height="2.3" fill="#1a7cf5"/>
<rect x="748.0" y="712.0" width="4.2" height="2.3" fill="#1a7cf5"/>
<rect x="754.5" y="696.0" width="4.2" height="18.3" fill="#1a7cf5"/>
<rect x="761.0" y="707.2" width="4.3" height="7.1" fill="#1a7cf5"/>
<rect x="767.6" y="712.0" width="4.3" height="2.3" fill="#1a7cf5"/>
<rect x="787.3" y="703.2" width="4.2" height="11.1" fill="#1a7cf5"/>
<rect x="813.6" y="712.0" width="4.2" height="2.3" fill="#1a7cf5"/>
<rect x="820.1" y="699.7" width="4.3" height="14.6" fill="#1a7cf5"/>
<rect x="826.7" y="712.0" width="4.3" height="2.3" fill="#1a7cf5"/>
<rect x="247.9" y="685" width="1" height="4.5" fill="#bdbdbd"/>
<rect x="366.3" y="685" width="1" height="4.5" fill="#bdbdbd"/>
<rect x="484.5" y="685" width="1" height="4.5" fill="#bdbdbd"/>
<rect x="602.9" y="685" width="1" height="4.5" fill="#bdbdbd"/>
<rect x="721.0" y="685" width="1" height="4.5" fill="#bdbdbd"/>
<rect x="839.3" y="685" width="1" height="4.5" fill="#bdbdbd"/>
</svg>
<div id="panel"></div>
<div class="t" style="left:978.5px;top:40px;font-size:11.5px;color:#1a8cff;transform:scaleX(.914);transform-origin:0 50%">View summary</div>
<div class="abs" style="left:967px;top:61px;width:313px;height:1px;background:#dcdcdc"></div>
<div class="abs" style="left:978px;top:59.5px;width:69px;height:2px;background:#1a8cff"></div>
<div class="abs" style="left:978px;top:95px;width:10px;height:10px;border-radius:50%;background:#9da2aa"></div>
<div class="t" style="left:997.5px;top:88.5px;font-size:12px;color:#222;transform:scaleX(.92);transform-origin:0 50%">Demo - Customer A</div>
<svg class="abs" style="left:1103px;top:87.5px" width="14" height="13" viewBox="0 0 24 23"><path d="M12 2 L14.9 8.6 L22 9.2 L16.6 13.9 L18.2 20.9 L12 17.2 L5.8 20.9 L7.4 13.9 L2 9.2 L9.1 8.6 Z" fill="none" stroke="#c8c8c8" stroke-width="1.6" stroke-linejoin="round"/></svg>
<svg class="abs" style="left:1255px;top:93px" width="15" height="4" viewBox="0 0 15 4"><circle cx="2" cy="2" r="1.2" fill="#333"/><circle cx="7.2" cy="2" r="1.2" fill="#333"/><circle cx="12.4" cy="2" r="1.2" fill="#333"/></svg>
<div class="t" style="left:997.5px;top:104px;font-size:10px;color:#9a9a9a;transform:scaleX(.93);transform-origin:0 50%">at Today, 11:13:57</div>
<svg class="abs" style="left:978px;top:139.5px" width="10" height="7" viewBox="0 0 10 7"><path d="M1 1.2L5 5.2L9 1.2" fill="none" stroke="#222" stroke-width="1.5"/></svg>
<div class="t" style="left:997.5px;top:136.5px;font-size:12px;color:#222;transform:scaleX(.93);transform-origin:0 50%">Properties</div>
<div class="t" style="left:979.5px;top:161.5px;font-size:10.5px;color:#9a9a9a;transform:scaleX(.965);transform-origin:0 50%">Health</div>
<div class="abs" style="left:1075px;top:160.5px;width:56px;height:15px;border:1px solid #f08c8c;background:#fdecec;border-radius:8px;color:#e25555;font-size:8.5px;text-align:center;line-height:13px;letter-spacing:.3px">CRITICAL</div>
<div class="t" style="left:979.5px;top:185px;font-size:10.5px;color:#9a9a9a;transform:scaleX(.965);transform-origin:0 50%">Query</div>
<div class="t" style="left:1075px;top:184.5px;font-family:'Liberation Mono',monospace;font-size:10.5px;letter-spacing:-.2px;line-height:16px;color:#5c5c5c">(domain IN ("Azure App",<br>"customer A", "security check",<br>&nbsp;"AWS Mobile App"))</div>
<div class="t" style="left:979.5px;top:240.5px;font-size:10.5px;color:#9a9a9a;transform:scaleX(.965);transform-origin:0 50%">Last change</div>
<div class="t" style="left:1075px;top:240px;font-size:10.5px;color:#444;transform:scaleX(.965);transform-origin:0 50%">Today, 11:13:57</div>
<div class="t" style="left:979.5px;top:263.5px;font-size:10.5px;color:#9a9a9a;transform:scaleX(.965);transform-origin:0 50%">Components</div>
<div class="t" style="left:1075px;top:263px;font-size:10.5px;color:#444;transform:scaleX(.965);transform-origin:0 50%">In total: 91</div>
<div class="t" style="left:1075px;top:279px;font-size:10.5px;color:#444;transform:scaleX(.965);transform-origin:0 50%">In clear health state: 91</div>
<div class="abs" style="left:1039px;top:204px;width:144.5px;height:26px;background:rgba(33,33,33,.92);border-radius:2px;box-shadow:0 2px 6px rgba(0,0,0,.25)"></div>
<div class="abs" style="left:1107px;top:229.5px;width:0;height:0;border-left:4px solid transparent;border-right:4px solid transparent;border-top:4px solid rgba(33,33,33,.92)"></div>
<div class="t" style="left:1045px;top:211.2px;font-size:12px;color:#fff;font-weight:bold;transform:scaleX(.89);transform-origin:0 50%">Jun 22, 2022, 11:13:57.375</div>
<svg class="abs" style="left:1114px;top:250px" width="13" height="15" viewBox="0 0 13 15"><path d="M4 1.5C4 0.8 5.2 0.8 5.2 1.5V7L5.8 5.5C6.2 5 7 5.2 7 5.8L7.2 6.5C7.5 6 8.3 6.2 8.3 6.8L8.5 7.3C8.8 6.9 9.6 7 9.6 7.6V10.5C9.6 12.5 8.5 13.8 6.5 13.8C4.8 13.8 4 13 3 11.5L1.3 8.8C1 8.2 1.8 7.6 2.3 8.1L4 9.8Z" fill="#fff" stroke="#111" stroke-width="1"/></svg>
<svg class="abs" style="left:978px;top:318.5px" width="10" height="7" viewBox="0 0 10 7"><path d="M1 1.2L5 5.2L9 1.2" fill="none" stroke="#222" stroke-width="1.5"/></svg>
<div class="t" style="left:997.5px;top:316px;font-size:12px;color:#222;transform:scaleX(.93);transform-origin:0 50%">Problems</div>
<div class="abs" style="left:1251px;top:315px;width:16.5px;height:15.5px;border:1px solid #aaa;border-radius:8px;font-size:9.5px;color:#999;text-align:center;line-height:13.5px">0</div>
<svg class="abs" style="left:1095px;top:335px" width="55" height="45" viewBox="0 0 55 45">
<path d="M10.6 40.6L20.2 14.2L37 30.2Z" fill="#3d9df5"/>
<path d="M10.6 40.6L20.2 14.2L26 26Z" fill="#7dc3fb"/>
<ellipse cx="28.5" cy="22.3" rx="11.5" ry="3.6" transform="rotate(43 28.5 22.3)" fill="#1565d8"/>
<path d="M23 6.2C26.5 8 26.8 12 24.2 15.5" fill="none" stroke="#1db43a" stroke-width="1.4" stroke-linecap="round"/>
<path d="M32.3 8.3C35 9.5 34.5 12 32 13C29.5 14.2 30 16.5 32.5 17.2C34.5 18 33 21 29.8 20.8" fill="none" stroke="#f5a623" stroke-width="1.3" stroke-linecap="round"/>
<path d="M32.3 26.7C35 24 40 23.5 44.1 26.4" fill="none" stroke="#f25a7a" stroke-width="1.4" stroke-linecap="round"/>
<circle cx="12.4" cy="6.3" r=".8" fill="#1db43a"/><circle cx="40.4" cy="9.3" r=".8" fill="#1db43a"/>
<circle cx="13.7" cy="16.5" r="1.1" fill="#f25a7a"/><circle cx="38.4" cy="16.5" r="1.2" fill="#f25a7a"/>
<circle cx="44.8" cy="20.4" r="1" fill="#f5a623"/><circle cx="24.8" cy="35.4" r="1.1" fill="#f25a7a"/>
<circle cx="38.2" cy="36.6" r="1" fill="#f5a623"/><circle cx="19.6" cy="28.9" r=".7" fill="#e6f06a"/>
</svg>
<div class="t" style="left:1026px;top:386px;font-size:11px;color:#9a9a9a;transform:scaleX(.939);transform-origin:0 50%">Hooray, no problems detected at this time!</div>
<svg class="abs" style="left:978px;top:429.5px" width="10" height="7" viewBox="0 0 10 7"><path d="M1 1.2L5 5.2L9 1.2" fill="none" stroke="#222" stroke-width="1.5"/></svg>
<div class="t" style="left:997.5px;top:427.5px;font-size:12px;color:#222;transform:scaleX(.93);transform-origin:0 50%">Events</div>
<div class="abs" style="left:978px;top:450px;width:289.5px;height:71px;background:#fff;border-radius:3px"></div>
<svg class="abs" style="left:993px;top:460.8px" width="16" height="16" viewBox="0 0 16 16"><circle cx="8" cy="8" r="7" fill="none" stroke="#f8a964" stroke-width="1.3"/><path d="M8 4.2V9" stroke="#f8a964" stroke-width="1.3"/><circle cx="8" cy="11.4" r=".8" fill="#f8a964"/></svg>
<div class="t" style="left:1017.5px;top:460.2px;font-size:11px;color:#333;transform:scaleX(.959);transform-origin:0 50%"><span style="text-decoration:underline;text-decoration-color:#777">customer A</span>&nbsp;&nbsp;(customer)</div>
<div class="t" style="left:1017.5px;top:476.3px;font-size:11px;color:#a5a5a5;transform:scaleX(.853);transform-origin:0 50%">Health State Changed&nbsp;&nbsp;-&nbsp;&nbsp;StackState</div>
<div class="t" style="left:1017.5px;top:497.2px;font-size:11px;color:#9a9a9a;text-decoration:underline;transform:scaleX(.847);transform-origin:0 50%">Today, 13:06:00</div>
<div class="abs" style="left:1127px;top:496px;width:44.5px;height:15px;border:1px solid #6cc06c;background:#eef9ee;border-radius:8px;color:#45a845;font-size:8.5px;text-align:center;line-height:13px;letter-spacing:.3px">CLEAR</div>
<svg class="abs" style="left:1178px;top:499.5px" width="10" height="8" viewBox="0 0 10 8"><path d="M0.5 4H9M6 1L9 4L6 7" fill="none" stroke="#999" stroke-width="1"/></svg>
<div class="abs" style="left:1192.3px;top:496px;width:61.5px;height:15px;border:1px solid #f7a25f;background:#fff3e9;border-radius:8px;color:#f0873a;font-size:8.5px;text-align:center;line-height:13px;letter-spacing:.3px">DEVIATING</div>
<div class="abs" style="left:978px;top:523px;width:289.5px;height:71px;background:#fff;border-radius:3px"></div>
<svg class="abs" style="left:993px;top:533.8px" width="16" height="16" viewBox="0 0 16 16"><circle cx="8" cy="8" r="7" fill="none" stroke="#f8a964" stroke-width="1.3"/><path d="M8 4.2V9" stroke="#f8a964" stroke-width="1.3"/><circle cx="8" cy="11.4" r=".8" fill="#f8a964"/></svg>
<div class="t" style="left:1017.5px;top:533.2px;font-size:11px;color:#333;transform:scaleX(.959);transform-origin:0 50%"><span style="text-decoration:underline;text-decoration-color:#777">invoice_lb2</span>&nbsp;&nbsp;(nginx)</div>
<div class="t" style="left:1017.5px;top:549.3px;font-size:11px;color:#a5a5a5;transform:scaleX(.853);transform-origin:0 50%">Health State Changed&nbsp;&nbsp;-&nbsp;&nbsp;StackState</div>
<div class="t" style="left:1017.5px;top:570.2px;font-size:11px;color:#9a9a9a;text-decoration:underline;transform:scaleX(.847);transform-origin:0 50%">Today, 13:05:37</div>
<div class="abs" style="left:1133px;top:569px;width:44.5px;height:15px;border:1px solid #6cc06c;background:#eef9ee;border-radius:8px;color:#45a845;font-size:8.5px;text-align:center;line-height:13px;letter-spacing:.3px">CLEAR</div>
<svg class="abs" style="left:1184px;top:572.5px" width="10" height="8" viewBox="0 0 10 8"><path d="M0.5 4H9M6 1L9 4L6 7" fill="none" stroke="#999" stroke-width="1"/></svg>
<div class="abs" style="left:1198.4px;top:569px;width:55.5px;height:15px;border:1px solid #ee7c7c;background:#fdeaea;border-radius:8px;color:#e55353;font-size:8.5px;text-align:center;line-height:13px;letter-spacing:.3px">CRITICAL</div>
<div class="abs" style="left:978px;top:596px;width:289.5px;height:71px;background:#fff;border-radius:3px"></div>
<svg class="abs" style="left:993px;top:606.8px" width="16" height="16" viewBox="0 0 16 16"><circle cx="8" cy="8" r="7" fill="none" stroke="#f8a964" stroke-width="1.3"/><path d="M8 4.2V9" stroke="#f8a964" stroke-width="1.3"/><circle cx="8" cy="11.4" r=".8" fill="#f8a964"/></svg>
<div class="t" style="left:1017.5px;top:606.2px;font-size:11px;color:#333;transform:scaleX(.959);transform-origin:0 50%"><span style="text-decoration:underline;text-decoration-color:#777">invoice_lb1</span>&nbsp;&nbsp;(nginx)</div>
<div class="t" style="left:1017.5px;top:622.3px;font-size:11px;color:#a5a5a5;transform:scaleX(.853);transform-origin:0 50%">Health State Changed&nbsp;&nbsp;-&nbsp;&nbsp;StackState</div>
<div class="t" style="left:1017.5px;top:643.2px;font-size:11px;color:#9a9a9a;text-decoration:underline;transform:scaleX(.847);transform-origin:0 50%">Today, 13:05:37</div>
<div class="abs" style="left:1133px;top:642px;width:44.5px;height:15px;border:1px solid #6cc06c;background:#eef9ee;border-radius:8px;color:#45a845;font-size:8.5px;text-align:center;line-height:13px;letter-spacing:.3px">CLEAR</div>
<svg class="abs" style="left:1184px;top:645.5px" width="10" height="8" viewBox="0 0 10 8"><path d="M0.5 4H9M6 1L9 4L6 7" fill="none" stroke="#999" stroke-width="1"/></svg>
<div class="abs" style="left:1198.4px;top:642px;width:55.5px;height:15px;border:1px solid #ee7c7c;background:#fdeaea;border-radius:8px;color:#e55353;font-size:8.5px;text-align:center;line-height:13px;letter-spacing:.3px">CRITICAL</div>
<div class="abs" style="left:978px;top:669px;width:289.5px;height:71px;background:#fff;border-radius:3px"></div>
<svg class="abs" style="left:993px;top:679.8px" width="16" height="16" viewBox="0 0 16 16"><circle cx="8" cy="8" r="7" fill="none" stroke="#f8a964" stroke-width="1.3"/><path d="M8 4.2V9" stroke="#f8a964" stroke-width="1.3"/><circle cx="8" cy="11.4" r=".8" fill="#f8a964"/></svg>
<div class="t" style="left:1017.5px;top:679.2px;font-size:11px;color:#333;transform:scaleX(.959);transform-origin:0 50%"><span style="text-decoration:underline;text-decoration-color:#777">invoices1</span>&nbsp;&nbsp;(spring_boot)</div>
<div class="t" style="left:1017.5px;top:695.3px;font-size:11px;color:#a5a5a5;transform:scaleX(.853);transform-origin:0 50%">Health State Changed&nbsp;&nbsp;-&nbsp;&nbsp;StackState</div>
<div class="t" style="left:1017.5px;top:716.2px;font-size:11px;color:#9a9a9a;text-decoration:underline;transform:scaleX(.847);transform-origin:0 50%">Today, 13:05:35</div>
<div class="abs" style="left:1127px;top:715px;width:44.5px;height:15px;border:1px solid #6cc06c;background:#eef9ee;border-radius:8px;color:#45a845;font-size:8.5px;text-align:center;line-height:13px;letter-spacing:.3px">CLEAR</div>
<svg class="abs" style="left:1178px;top:718.5px" width="10" height="8" viewBox="0 0 10 8"><path d="M0.5 4H9M6 1L9 4L6 7" fill="none" stroke="#999" stroke-width="1"/></svg>
<div class="abs" style="left:1192.3px;top:715px;width:61.5px;height:15px;border:1px solid #f7a25f;background:#fff3e9;border-radius:8px;color:#f0873a;font-size:8.5px;text-align:center;line-height:13px;letter-spacing:.3px">DEVIATING</div>
<div class="hl" style="left:951px;top:120px;width:329px;height:191px"></div>
<div class="hl" style="left:210px;top:611px;width:360px;height:112px"></div>
<svg class="abs" style="left:0;top:713px" width="12" height="12" viewBox="0 0 12 12"><path d="M0 0C0 7 4 12 11 12H0Z" fill="#000"/></svg>
<svg class="abs" style="left:1268px;top:713px" width="12" height="12" viewBox="0 0 12 12"><path d="M12 0C12 7 8 12 1 12H12Z" fill="#000"/></svg>
</body></html>
